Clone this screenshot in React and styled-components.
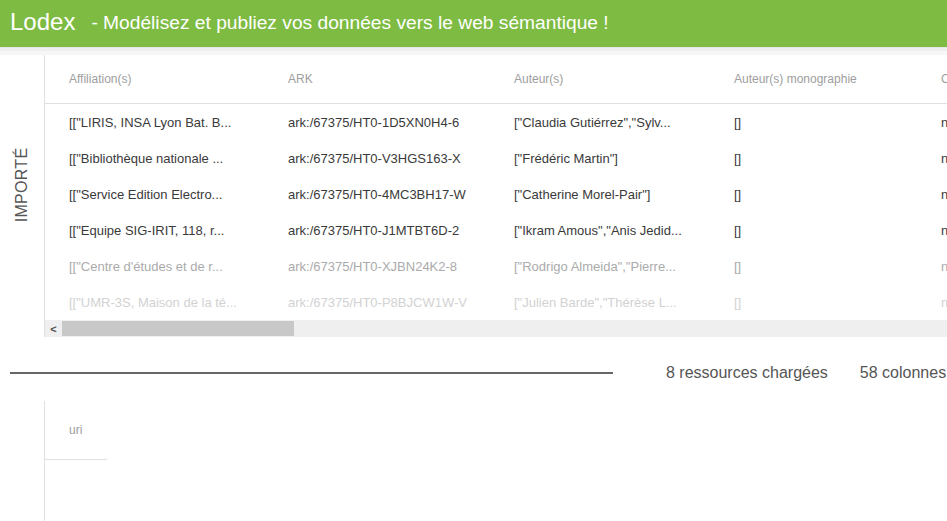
import React from "react";
import styled, { createGlobalStyle } from "styled-components";

const Global = createGlobalStyle`
  html, body { margin: 0; padding: 0; background: #fff; }
  body { font-family: "Liberation Sans", Arial, sans-serif; overflow: hidden; }
`;

const Page = styled.div`
  width: 947px;
  height: 521px;
  overflow: hidden;
  display: flex;
  flex-direction: column;
`;

const AppBar = styled.header`
  height: 47px;
  background: #7dbb42;
  display: flex;
  align-items: center;
  padding: 0 10px;
  color: #fff;
  box-shadow: 0 1px 0 #e6e6e6, 0 4px 0 #efefef, 0 8px 0 #f6f6f6;
  position: relative;
  z-index: 1;
`;

const Brand = styled.span`
  font-size: 24px;
  line-height: 1;
  margin-top: -3px;
`;

const Tagline = styled.span`
  font-size: 19.2px;
  margin-left: 16px;
  margin-top: -1px;
  white-space: nowrap;
`;

const Imported = styled.section`
  margin-top: 8px;
  display: flex;
  height: 282px;
`;

const SideLabel = styled.div`
  width: 44px;
  flex: none;
  display: flex;
  align-items: center;
  justify-content: center;
  padding-bottom: 22px;
`;

const Vertical = styled.span`
  transform: rotate(-90deg);
  white-space: nowrap;
  font-size: 16px;
  color: #555;
  letter-spacing: 0.3px;
`;

const TableWrap = styled.div`
  flex: 1;
  min-width: 0;
  border-left: 1px solid #e0e0e0;
  display: flex;
  flex-direction: column;
  overflow: hidden;
`;

const Grid = styled.div`
  display: grid;
  grid-template-columns: 219px 226px 220px 207px 200px;
  width: max-content;
`;

const HeadCell = styled.div`
  height: 48px;
  display: flex;
  align-items: center;
  padding-left: 24px;
  font-size: 12px;
  color: #9e9e9e;
  border-bottom: 1px solid #e0e0e0;
  white-space: nowrap;
  overflow: hidden;
`;

const Cell = styled.div`
  height: 36px;
  display: flex;
  align-items: center;
  padding-left: 24px;
  font-size: 13px;
  color: ${(p) => p.$tone};
  white-space: nowrap;
  overflow: hidden;
`;

const ScrollTrack = styled.div`
  height: 17px;
  background: #efefef;
  display: flex;
  align-items: center;
  margin-top: auto;
`;

const ScrollArrow = styled.span`
  width: 17px;
  display: flex;
  justify-content: center;
  color: #505050;
  font-size: 11px;
  font-weight: bold;
`;

const ScrollThumb = styled.div`
  width: 232px;
  height: 15px;
  background: #c8c8c8;
`;

const Summary = styled.div`
  margin-top: 17px;
  height: 38px;
  display: flex;
  align-items: center;
  padding-left: 10px;
`;

const Rule = styled.div`
  width: 603px;
  height: 2px;
  background: #666;
`;

const Stat = styled.span`
  font-size: 16px;
  color: #555;
  margin-left: ${(p) => p.$gap}px;
  white-space: nowrap;
`;

const Mapping = styled.section`
  margin-top: 9px;
  margin-left: 44px;
  border-left: 1px solid #e0e0e0;
  flex: 1;
`;

const FieldCell = styled.div`
  width: 38px;
  height: 58px;
  display: flex;
  align-items: center;
  padding-left: 24px;
  font-size: 12px;
  color: #9e9e9e;
  border-bottom: 1px solid #e0e0e0;
`;

const columns = ["Affiliation(s)", "ARK", "Auteur(s)", "Auteur(s) monographie", "Catégorie WOS"];

const rows = [
  ['[["LIRIS, INSA Lyon Bat. B...', "ark:/67375/HT0-1D5XN0H4-6", '["Claudia Gutiérrez","Sylv...', "[]", "null"],
  ['[["Bibliothèque nationale ...', "ark:/67375/HT0-V3HGS163-X", '["Frédéric Martin"]', "[]", "null"],
  ['[["Service Edition Electro...', "ark:/67375/HT0-4MC3BH17-W", '["Catherine Morel-Pair"]', "[]", "null"],
  ['[["Equipe SIG-IRIT, 118, r...', "ark:/67375/HT0-J1MTBT6D-2", '["Ikram Amous","Anis Jedid...', "[]", "null"],
  ['[["Centre d\'études et de r...', "ark:/67375/HT0-XJBN24K2-8", '["Rodrigo Almeida","Pierre...', "[]", "null"],
  ['[["UMR-3S, Maison de la té...', "ark:/67375/HT0-P8BJCW1W-V", '["Julien Barde","Thérèse L...', "[]", "null"],
];

const tones = ["#3a3a3a", "#3a3a3a", "#3a3a3a", "#3a3a3a", "#ababab", "#d2d2d2"];

export default function App() {
  return (
    <Page>
      <Global />
      <AppBar>
        <Brand>Lodex</Brand>
        <Tagline>- Modélisez et publiez vos données vers le web sémantique !</Tagline>
      </AppBar>
      <Imported>
        <SideLabel>
          <Vertical>IMPORTÉ</Vertical>
        </SideLabel>
        <TableWrap>
          <Grid>
            {columns.map((c) => (
              <HeadCell key={c}>{c}</HeadCell>
            ))}
            {rows.map((r, i) =>
              r.map((v, j) => (
                <Cell key={`${i}-${j}`} $tone={tones[i]}>
                  {v}
                </Cell>
              ))
            )}
          </Grid>
          <ScrollTrack>
            <ScrollArrow>&lt;</ScrollArrow>
            <ScrollThumb />
          </ScrollTrack>
        </TableWrap>
      </Imported>
      <Summary>
        <Rule />
        <Stat $gap={53}>8 ressources chargées</Stat>
        <Stat $gap={32}>58 colonnes</Stat>
      </Summary>
      <Mapping>
        <FieldCell>uri</FieldCell>
      </Mapping>
    </Page>
  );
}
